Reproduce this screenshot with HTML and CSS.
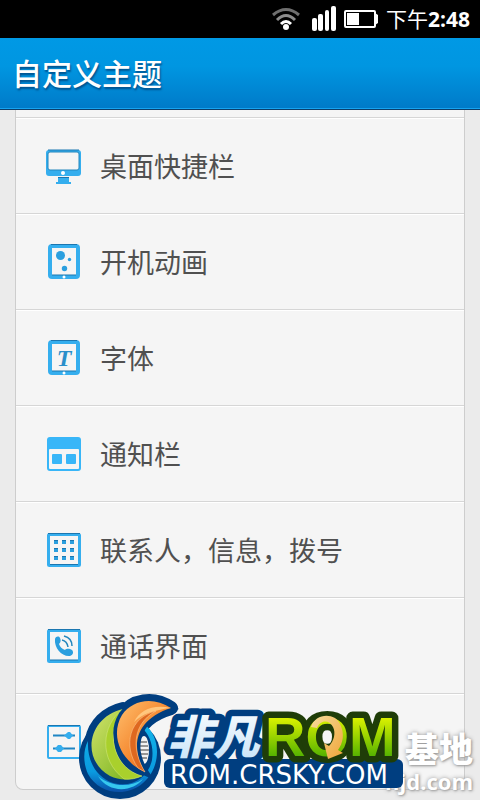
FILE: index.html
```html
<!DOCTYPE html>
<html lang="zh-CN">
<head>
    <meta charset="UTF-8">
    <meta name="viewport" content="width=device-width, initial-scale=1.0">
    <title>自定义主题</title>
    <link rel="stylesheet" href="styles.css">
</head>
<body>
    <div class="pantalla">
        <div class="status">
            <svg class="wifi" width="28" height="24" viewBox="0 0 28 24" fill="none" stroke-width="3">
                <path d="M1 8 Q14 -3 27 8" stroke="#6f6f6f"/>
                <path d="M5 13 Q14 4 23 13" stroke="#8c8c8c"/>
                <path d="M9 17 Q14 12 19 17" stroke="#fff"/>
                <circle cx="14" cy="20" r="3" fill="#fff"/>
            </svg>
            <svg width="24" height="26" viewBox="0 0 24 26" fill="#fff">
                <rect x="0" y="12" width="5" height="13" rx="2"/>
                <rect x="6" y="8" width="5" height="17" rx="2"/>
                <rect x="13" y="4" width="4" height="21" rx="2"/>
                <rect x="19" y="0" width="5" height="25" rx="2"/>
            </svg>
            <svg width="34" height="18" viewBox="0 0 34 18">
                <rect x="1" y="1" width="30" height="16" rx="1" fill="none" stroke="#fff" stroke-width="2"/>
                <rect x="3" y="3" width="12" height="12" fill="#fff"/>
                <path d="M31 3 L34 5 V13 L31 15 Z" fill="#fff"/>
            </svg>
            <span class="hora">下午<b>2:48</b></span>
        </div>
        <header class="titulo">
            <h1>自定义主题</h1>
        </header>
        <main class="lista">
            <a class="fila" href="#">
                <svg class="icono" viewBox="0 0 36 36">
                    <rect x="0" y="2" width="35" height="26" rx="3" fill="#35aeee"/>
                    <rect x="2" y="4" width="31" height="18" rx="2" fill="#f5f5f5" stroke="#2286bd"/>
                    <path d="M2 2 H33" stroke="#1b76b0"/>
                    <circle cx="17" cy="25" r="2" fill="#fff"/>
                    <path d="M12 29 H23 L23 34 H25 V36 H10 V34 H12 Z" fill="#35aeee"/>
                    <path d="M12 29.500 H23" stroke="#1b76b0"/>
                </svg>
                <span>桌面快捷栏</span>
            </a>
            <a class="fila" href="#">
                <svg class="icono" viewBox="0 0 36 36">
                    <rect x="2" y="0" width="32" height="35" rx="4" fill="#35aeee"/>
                    <path d="M5 0.500 H31" stroke="#1b76b0"/>
                    <rect x="6" y="4" width="24" height="27" fill="#f5f5f5"/>
                    <path d="M6 31 H30" stroke="#1b76b0"/>
                    <circle cx="18" cy="33" r="1.500" fill="#fff"/>
                    <g fill="#2a9fdf">
                        <circle cx="14.500" cy="11.500" r="4.500"/>
                        <circle cx="23.500" cy="15.500" r="1.700"/>
                        <circle cx="18.500" cy="24.500" r="2.700"/>
                    </g>
                </svg>
                <span>开机动画</span>
            </a>
            <a class="fila" href="#">
                <svg class="icono" viewBox="0 0 36 36">
                    <rect x="2" y="0" width="32" height="35" rx="4" fill="#35aeee"/>
                    <path d="M5 0.500 H31" stroke="#1b76b0"/>
                    <rect x="6" y="4" width="24" height="27" fill="#f5f5f5"/>
                    <path d="M6 31 H30" stroke="#1b76b0"/>
                    <circle cx="18" cy="33" r="1.500" fill="#fff"/>
                    <text class="letra" x="18" y="26" text-anchor="middle">T</text>
                </svg>
                <span>字体</span>
            </a>
            <a class="fila" href="#">
                <svg class="icono" viewBox="0 0 36 36">
                    <rect x="1" y="1" width="34" height="34" rx="3" fill="#38b6f8"/>
                    <rect x="3" y="13" width="30" height="20" rx="1" fill="#f5f5f5"/>
                    <g fill="#38b6f8">
                        <rect x="6" y="18" width="10" height="10" rx="1"/>
                        <rect x="20" y="18" width="10" height="10" rx="1"/>
                    </g>
                </svg>
                <span>通知栏</span>
            </a>
            <a class="fila" href="#">
                <svg class="icono" viewBox="0 0 36 36">
                    <rect x="2.500" y="2.500" width="31" height="31" rx="1" fill="none" stroke="#35aeee" stroke-width="3"/>
                    <path d="M2 1.500 H34 M4 32.500 H32" stroke="#1b76b0"/>
                    <path d="M8 10 h4 m4 0 h4 m4 0 h4 M8 18 h4 m4 0 h4 m4 0 h4 M8 26 h4 m4 0 h4 m4 0 h4" stroke="#2a9fdf" stroke-width="4"/>
                    <path d="M8 8.500 h4 m4 0 h4 m4 0 h4 M8 16.500 h4 m4 0 h4 m4 0 h4 M8 24.500 h4 m4 0 h4 m4 0 h4" stroke="#1b76b0"/>
                </svg>
                <span>联系人，信息，拨号</span>
            </a>
            <a class="fila" href="#">
                <svg class="icono" viewBox="0 0 36 36">
                    <rect x="2.500" y="2.500" width="31" height="31" rx="1" fill="none" stroke="#35aeee" stroke-width="3"/>
                    <path d="M2 1.500 H34 M4 32 H32" stroke="#1b76b0"/>
                    <path d="M9 11 C10 8 13 8 14 10 C15 12 15 14 13 16 C14 19 16 21 19 22 C21 20 24 21 26 22 C28 24 27 27 24 28 C16 29 8 20 9 11 Z" fill="#2a9fdf"/>
                    <path d="M16 12 Q21 13 22 19 M18 8 Q26 10 26 18" fill="none" stroke="#2286bd" stroke-width="1.500"/>
                </svg>
                <span>通话界面</span>
            </a>
            <a class="fila" href="#">
                <svg class="icono" viewBox="0 0 36 36">
                    <rect x="2" y="2" width="32" height="32" rx="1" fill="none" stroke="#35aeee" stroke-width="2"/>
                    <path d="M2 1.500 H34" stroke="#1b76b0"/>
                    <path d="M7 11.500 H29 M7 24.500 H29" stroke="#1f86c4" stroke-width="2"/>
                    <path d="M18 11.500 L22 8 H24 L27 11.500 L24 15 H22 Z M9 24.500 L12 21 H15 L18 24.500 L15 28 H12 Z" fill="#35aeee"/>
                </svg>
            </a>
        </main>

        <div class="marca">
            <b>基地</b>
            <span>njd.com</span>
        </div>
        <svg class="logo" width="326" height="108" viewBox="0 0 326 108">
            <defs>
                <linearGradient id="verde" x1="0" y1="0" x2="0" y2="1">
                    <stop offset="0.200" stop-color="#dcf200"/>
                    <stop offset="0.800" stop-color="#58b400"/>
                </linearGradient>
                <linearGradient id="oro" x1="0" y1="0" x2="1" y2="1">
                    <stop offset="0" stop-color="#f6dc9a"/>
                    <stop offset="1" stop-color="#f0a63a"/>
                </linearGradient>
                <linearGradient id="hielo" x1="0" y1="0" x2="0" y2="1">
                    <stop offset="0" stop-color="#ffffff"/>
                    <stop offset="1" stop-color="#c4e2f8"/>
                </linearGradient>
                <linearGradient id="naranja" x1="0" y1="0" x2="1" y2="1">
                    <stop offset="0" stop-color="#ffc06e"/>
                    <stop offset="0.500" stop-color="#f58a32"/>
                    <stop offset="1" stop-color="#d95412"/>
                </linearGradient>
                <linearGradient id="lima" x1="0" y1="0" x2="1" y2="1">
                    <stop offset="0" stop-color="#d3e46c"/>
                    <stop offset="1" stop-color="#6fae16"/>
                </linearGradient>
                <linearGradient id="cian" x1="0" y1="0" x2="0" y2="1">
                    <stop offset="0" stop-color="#12b4ea"/>
                    <stop offset="0.700" stop-color="#0a9be0"/>
                    <stop offset="1" stop-color="#0a4fa8"/>
                </linearGradient>
            </defs>
            <!-- emblema -->
            <circle cx="42" cy="65" r="41" fill="#003e80"/>
            <path d="M45 16 C10 24 2 66 32 83 C42 88 54 87 64 83 Z M93 15 C75 3 54 7 44 22 C32 42 42 68 67 79 C54 58 50 28 93 15 Z" fill="#003e80" stroke="#003e80" stroke-width="14" stroke-linejoin="round"/>
            <ellipse cx="66" cy="57" rx="5" ry="14" fill="#f2f2f2"/>
            <path d="M62 49 h7 M61 53 h9 M61 57 h10 M61 61 h9 M62 65 h7" stroke="#777" stroke-width="1.500"/>
            <path d="M66 31 C84 44 83 75 65 90 C48 105 21 101 10 81 C5 70 5 57 10 48 C9 68 18 84 35 90 C54 95 70 85 74 67 C76 53 72 42 63 34 Z" fill="url(#cian)"/>
            <path d="M20 83 C33 94 52 95 65 86 C55 99 31 101 20 83 Z" fill="#36c8ee"/>
            <path d="M45 16 C10 24 2 66 32 83 C42 88 54 87 64 83 C38 76 26 44 45 16 Z" fill="url(#lima)"/>
            <path d="M44 17 C24 32 20 66 46 86 C53 87 59 85 64 83 C38 76 26 44 44 17 Z" fill="#a9d02c" stroke="#d9ea80" stroke-width="0.500"/>
            <path d="M93 15 C75 3 54 7 44 22 C32 42 42 68 67 79 C54 58 53 28 93 15 Z" fill="url(#naranja)" stroke="#003e80" stroke-width="7" paint-order="stroke"/>
            <path d="M78 18 C52 24 44 52 60 75 L67 79 C55 60 52 32 78 18 Z" fill="#de6820" stroke="#ffd09a" stroke-width="0.500"/>
            <path d="M93 15 C75 11 62 17 56 29 C64 21 76 17 93 15 Z" fill="#ffc77e"/>
            <!-- rótulos -->
            <rect x="86" y="66" width="239" height="29" rx="6" fill="#003e80"/>
            <text class="feifan" x="89" y="61" fill="url(#hielo)">非凡</text>
            <text class="rom" x="187" y="63" fill="url(#verde)">ROM</text>
            <!-- flecha sobre la O -->
            <path d="M233 34 C237 20 257 19 262 31 C267 41 265 50 260 57 L265 60 L250 66 L246 50 L251 53 C256 48 258 40 255 34 C251 26 242 27 239 35 Z" fill="url(#oro)"/>
            <rect x="87" y="70" width="237" height="24" rx="5" fill="#003e80"/>
            <text class="url" x="92" y="91">ROM.CRSKY.COM</text>
        </svg>
    </div>
</body>
</html>
```
FILE: styles.css
```css
* {
    box-sizing: border-box;
}
body {
    margin: 0;
    background-color: #ebebeb;
    font-family: "Open Sans", "Noto Sans CJK SC", sans-serif;
}
.pantalla {
    position: relative;
    min-height: 100vh;
    overflow: hidden;
}
.status {
    display: flex;
    justify-content: flex-end;
    align-items: center;
    gap: 8px;
    height: 38px;
    padding-right: 10px;
    background-color: #000;
    color: #fff;
}
.wifi {
    margin-right: 4px;
}
.hora {
    font-size: 21px;
    line-height: 38px;
}
.titulo {
    height: 72px;
    padding: 0 12px;
    background: linear-gradient(#0099e5, #0096e1 40%, #007ac8);
    border-bottom: 1px solid #0b3f6b;
    box-shadow: inset 0 -1px #16a3f0;
}
.titulo h1 {
    margin: 0;
    color: #fff;
    font-size: 30px;
    font-weight: 500;
    line-height: 72px;
    text-shadow: 1px 2px 2px #00508c;
}
.lista {
    margin: 0 15px 11px;
    padding-top: 7px;
    background-color: #f5f5f5;
    border: 1px solid #cdcdcd;
    border-top: none;
    border-radius: 0 0 8px 8px;
}
.fila {
    display: flex;
    align-items: center;
    gap: 18px;
    height: 96px;
    padding-left: 30px;
    border-top: 1px solid #d6d6d6;
    box-shadow: inset 0 1px #fff;
    color: #505050;
    font-size: 27px;
    text-decoration: none;
}
.icono {
    width: 36px;
    height: 36px;
}
.letra {
    fill: #2a8fca;
    font: italic bold 24px "Liberation Serif", serif;
}
.marca {
    position: absolute;
    right: 7px;
    bottom: 6px;
    display: flex;
    flex-direction: column;
    align-items: flex-end;
    color: #fff;
    font-weight: bold;
    text-shadow: 0 0 4px #999, 1px 1px 2px #aaa;
}
.marca b {
    font-size: 34px;
    line-height: 36px;
}
.marca span {
    font-size: 22px;
    line-height: 28px;
}
.logo {
    position: absolute;
    left: 78px;
    bottom: 0;
}
.feifan {
    font: italic 900 46px "Noto Sans CJK SC", sans-serif;
    stroke: #003e80;
    stroke-width: 13px;
    stroke-linejoin: round;
    paint-order: stroke;
}
.rom {
    font: bold 56px "Liberation Sans", sans-serif;
    stroke: #1f3d08;
    stroke-width: 13px;
    stroke-linejoin: round;
    paint-order: stroke;
}
.url {
    fill: #fff;
    font: 26px "DejaVu Sans", sans-serif;
}
```
